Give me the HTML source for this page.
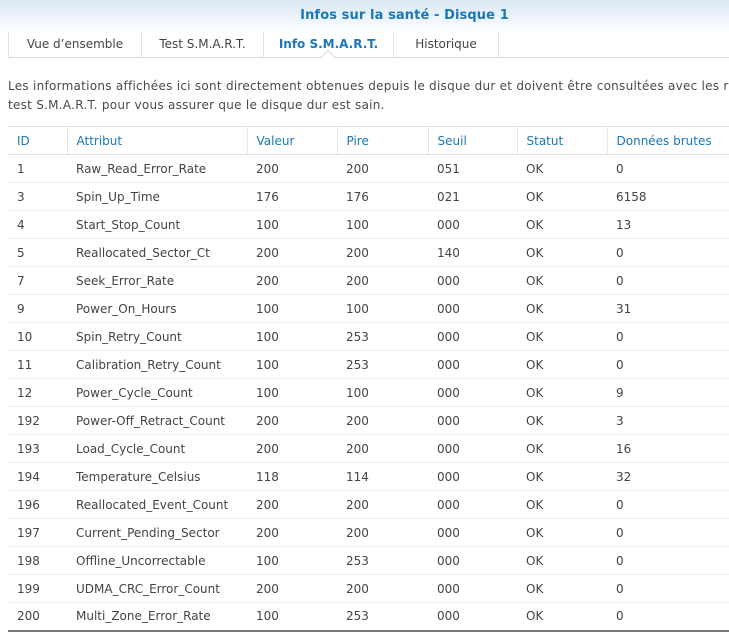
<!DOCTYPE html>
<html><head><meta charset="utf-8"><style>
*{margin:0;padding:0;box-sizing:border-box}
body{width:729px;height:632px;overflow:hidden;background:#fff;font-family:"DejaVu Sans","Liberation Sans",sans-serif;font-size:12px;color:#444;position:relative}
.top{position:absolute;left:0;top:0;width:729px;height:34px;background:linear-gradient(#d9e7f4,#fff)}
.title{position:absolute;left:0;width:729px;top:8px;text-align:center;padding-left:80px;font-weight:bold;color:#1a78b8;font-size:13px;letter-spacing:0.1px}
.tabs{position:absolute;top:32px;left:8px;height:26px;right:0;border-bottom:1px solid #d5dbe2}
.tab{position:absolute;top:0;height:25px;line-height:24px;border-left:1px solid #e2e5e8;color:#444;text-align:center}
.tab.act{color:#1a78b8;font-weight:bold}
.notch{position:absolute;top:52px;left:323px;width:10px;height:10px;background:#fff;border-left:1px solid #d5dbe2;border-top:1px solid #d5dbe2;transform:rotate(45deg)}
.desc{position:absolute;left:8px;top:77px;line-height:19px;white-space:nowrap;color:#4a4a4a;letter-spacing:0.27px}
table{position:absolute;left:8px;top:126px;border-collapse:collapse;width:730px}
th{height:28px;text-align:left;font-weight:normal;color:#1a78b8;padding-left:9px;border-top:1px solid #dde2e7;border-bottom:1px solid #dde2e7;border-left:1px solid #e6e9ec}
th:first-child{border-left:none}
td{height:28px;padding-left:9px;border-bottom:1px solid #eceff1;color:#444}
tr:last-child td{border-bottom:2px solid #777}
</style></head><body>
<div class="top"></div>
<div class="title">Infos sur la santé - Disque 1</div>
<div class="tabs">
<div class="tab" style="left:0;width:133px">Vue d’ensemble</div>
<div class="tab" style="left:133px;width:122px">Test S.M.A.R.T.</div>
<div class="tab act" style="left:255px;width:130px">Info S.M.A.R.T.</div>
<div class="tab" style="left:385px;width:106px;border-right:1px solid #e2e5e8">Historique</div>
</div>
<div class="notch"></div>
<div class="desc">Les informations affichées ici sont directement obtenues depuis le disque dur et doivent être consultées avec les r<br>test S.M.A.R.T. pour vous assurer que le disque dur est sain.</div>
<table>
<colgroup><col style="width:59px"><col style="width:180px"><col style="width:90px"><col style="width:91px"><col style="width:89px"><col style="width:90px"><col></colgroup>
<tr><th>ID</th><th>Attribut</th><th>Valeur</th><th>Pire</th><th>Seuil</th><th>Statut</th><th>Données brutes</th></tr>
<tr><td>1</td><td>Raw_Read_Error_Rate</td><td>200</td><td>200</td><td>051</td><td>OK</td><td>0</td></tr>
<tr><td>3</td><td>Spin_Up_Time</td><td>176</td><td>176</td><td>021</td><td>OK</td><td>6158</td></tr>
<tr><td>4</td><td>Start_Stop_Count</td><td>100</td><td>100</td><td>000</td><td>OK</td><td>13</td></tr>
<tr><td>5</td><td>Reallocated_Sector_Ct</td><td>200</td><td>200</td><td>140</td><td>OK</td><td>0</td></tr>
<tr><td>7</td><td>Seek_Error_Rate</td><td>200</td><td>200</td><td>000</td><td>OK</td><td>0</td></tr>
<tr><td>9</td><td>Power_On_Hours</td><td>100</td><td>100</td><td>000</td><td>OK</td><td>31</td></tr>
<tr><td>10</td><td>Spin_Retry_Count</td><td>100</td><td>253</td><td>000</td><td>OK</td><td>0</td></tr>
<tr><td>11</td><td>Calibration_Retry_Count</td><td>100</td><td>253</td><td>000</td><td>OK</td><td>0</td></tr>
<tr><td>12</td><td>Power_Cycle_Count</td><td>100</td><td>100</td><td>000</td><td>OK</td><td>9</td></tr>
<tr><td>192</td><td>Power-Off_Retract_Count</td><td>200</td><td>200</td><td>000</td><td>OK</td><td>3</td></tr>
<tr><td>193</td><td>Load_Cycle_Count</td><td>200</td><td>200</td><td>000</td><td>OK</td><td>16</td></tr>
<tr><td>194</td><td>Temperature_Celsius</td><td>118</td><td>114</td><td>000</td><td>OK</td><td>32</td></tr>
<tr><td>196</td><td>Reallocated_Event_Count</td><td>200</td><td>200</td><td>000</td><td>OK</td><td>0</td></tr>
<tr><td>197</td><td>Current_Pending_Sector</td><td>200</td><td>200</td><td>000</td><td>OK</td><td>0</td></tr>
<tr><td>198</td><td>Offline_Uncorrectable</td><td>100</td><td>253</td><td>000</td><td>OK</td><td>0</td></tr>
<tr><td>199</td><td>UDMA_CRC_Error_Count</td><td>200</td><td>200</td><td>000</td><td>OK</td><td>0</td></tr>
<tr><td>200</td><td>Multi_Zone_Error_Rate</td><td>100</td><td>253</td><td>000</td><td>OK</td><td>0</td></tr>
</table>
</body></html>
